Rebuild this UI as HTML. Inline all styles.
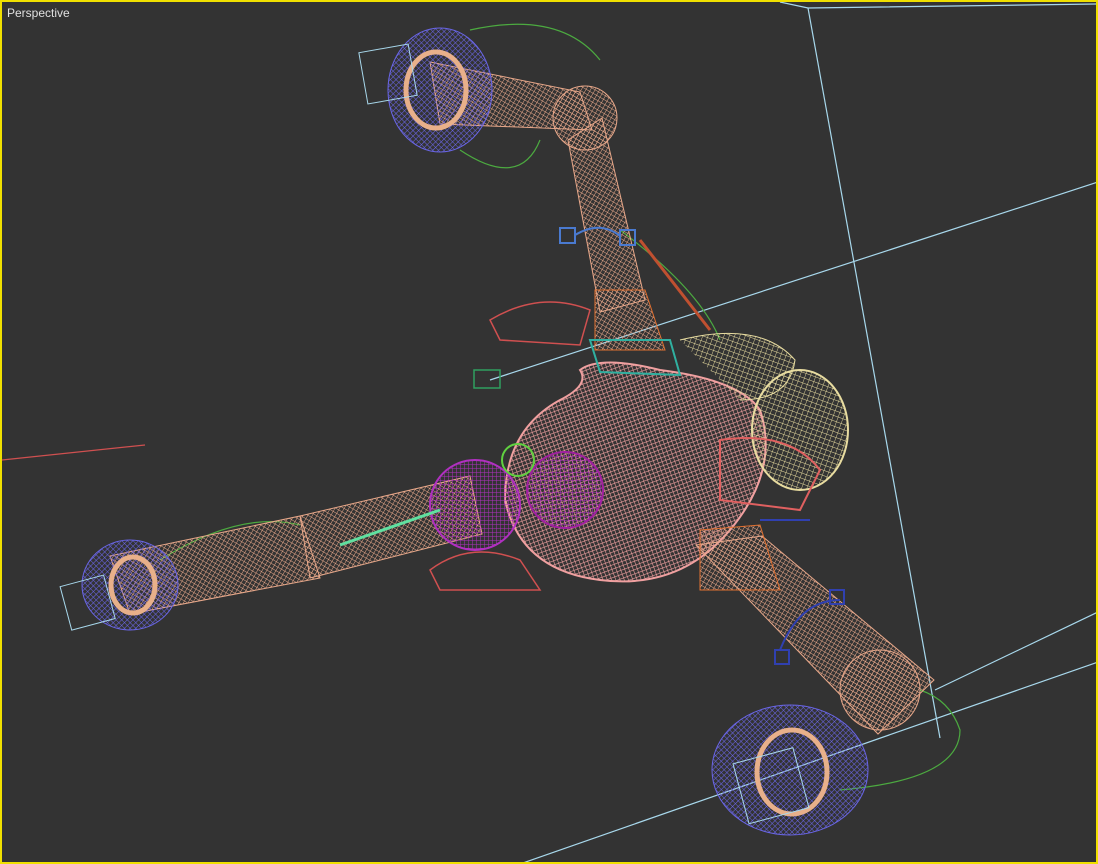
<!DOCTYPE html>
<html><head><style>
html,body{margin:0;padding:0;background:#333;}
.v{position:relative;width:1094px;height:860px;border:2px solid #f0e000;background:#333;overflow:hidden;}
.t{position:absolute;left:5px;top:4px;font:12px "Liberation Sans",sans-serif;color:#e0e0e0;}
svg{position:absolute;left:-2px;top:-2px;}
</style></head><body>
<div class="v">
<svg width="1098" height="864" viewBox="0 0 1098 864">
<defs>
<pattern id="h" width="4" height="4" patternUnits="userSpaceOnUse" patternTransform="rotate(30)"><path d="M0 0V4M0 0H4" stroke="#e8a88a" stroke-width="1"/></pattern>
<pattern id="p" width="4" height="4" patternUnits="userSpaceOnUse" patternTransform="rotate(-20)"><path d="M0 0V4M0 0H4" stroke="#f0a0a0" stroke-width="1.2"/></pattern>
<pattern id="b" width="4" height="4" patternUnits="userSpaceOnUse" patternTransform="rotate(45)"><path d="M0 0V4M0 0H4" stroke="#6a66e8" stroke-width="1.1"/></pattern>
<pattern id="y" width="5" height="5" patternUnits="userSpaceOnUse" patternTransform="rotate(20)"><path d="M0 0V5M0 0H5" stroke="#e8dca0" stroke-width="0.9"/></pattern>
<pattern id="m" width="4" height="4" patternUnits="userSpaceOnUse"><path d="M0 0V4M0 0H4" stroke="#b030c0" stroke-width="1"/></pattern>
</defs>
<g stroke="#a8d8ec" stroke-width="1.2" fill="none">
<path d="M780 2 L808 8 L1098 4"/><path d="M808 8 L940 738"/>
<path d="M490 380 L1098 182"/>
<path d="M935 690 L1098 612"/><path d="M520 864 L1098 662"/>
</g>
<path d="M2 460 L145 445" stroke="#d05050" stroke-width="1.2"/>
<g stroke="#4caa40" fill="none" stroke-width="1.2">
<path d="M470 30 Q560 10 600 60"/><path d="M460 150 Q520 190 540 140"/>
<path d="M160 560 Q240 510 300 525"/><path d="M840 790 Q960 780 960 730 Q950 700 920 690"/>
<path d="M620 230 Q700 290 720 340"/>
</g>
<polygon points="430,62 580,92 592,130 440,124" fill="url(#h)" stroke="#e8a88a"/>
<polygon points="568,140 602,118 645,300 600,312" fill="url(#h)" stroke="#e8a88a"/>
<circle cx="585" cy="118" r="32" fill="url(#h)" stroke="#e8a88a"/>
<polygon points="595,290 645,290 665,350 595,350" fill="url(#h)" stroke="#e07030"/>
<ellipse cx="440" cy="90" rx="52" ry="62" fill="url(#b)" stroke="#6a66e8"/>
<ellipse cx="436" cy="90" rx="30" ry="38" fill="none" stroke="#e8b08a" stroke-width="5"/>
<rect x="363" y="48" width="50" height="52" fill="none" stroke="#a8d8ec" transform="rotate(-10 388 74)"/>
<g fill="none" stroke="#4a7ad0" stroke-width="2"><rect x="560" y="228" width="15" height="15"/><rect x="620" y="230" width="15" height="15"/><path d="M575 235 Q600 220 620 236"/></g>
<path d="M640 240 L710 330" stroke="#c05030" stroke-width="3"/>
<path d="M580 370 Q600 355 660 370 Q740 380 760 410 Q780 470 730 530 Q680 590 600 580 Q520 570 505 500 Q505 430 560 400 Q590 385 580 370Z" fill="url(#p)" stroke="#f0a0a0" stroke-width="2"/>
<ellipse cx="800" cy="430" rx="48" ry="60" fill="url(#y)" stroke="#e8dca0" stroke-width="2"/>
<path d="M680 340 Q760 320 795 360 Q790 400 740 400" fill="url(#y)" stroke="#e8dca0"/>
<path d="M490 320 Q540 290 590 310 L580 345 L500 340 Z" fill="none" stroke="#d05050" stroke-width="1.5"/>
<path d="M430 570 Q470 540 520 560 L540 590 L440 590Z" fill="none" stroke="#d05050" stroke-width="1.5"/>
<rect x="474" y="370" width="26" height="18" fill="none" stroke="#30a060" stroke-width="1.5"/>
<path d="M590 340 L670 340 L680 375 L600 372Z" fill="none" stroke="#30b0a0" stroke-width="2"/>
<path d="M720 440 Q790 430 820 470 L800 510 L720 500Z" fill="none" stroke="#e06060" stroke-width="2"/>
<polygon points="110,556 300,516 320,578 130,614" fill="url(#h)" stroke="#e8a88a"/>
<polygon points="300,516 470,476 482,534 310,578" fill="url(#h)" stroke="#e8a88a"/>
<ellipse cx="130" cy="585" rx="48" ry="45" fill="url(#b)" stroke="#6a66e8"/>
<ellipse cx="133" cy="585" rx="22" ry="28" fill="none" stroke="#e8b08a" stroke-width="5"/>
<rect x="65" y="580" width="45" height="45" fill="none" stroke="#a8d8ec" transform="rotate(-15 88 602)"/>
<circle cx="475" cy="505" r="45" fill="url(#m)" stroke="#b030c0" stroke-width="2"/>
<circle cx="565" cy="490" r="38" fill="url(#m)" stroke="#a020a0" stroke-width="2"/>
<circle cx="518" cy="460" r="16" fill="none" stroke="#60d040" stroke-width="2"/>
<path d="M340 545 L440 510" stroke="#60e0a0" stroke-width="3"/>
<polygon points="696,545 762,536 934,680 878,734" fill="url(#h)" stroke="#e8a88a"/>
<polygon points="700,530 760,525 780,590 700,590" fill="url(#h)" stroke="#e07030"/>
<circle cx="880" cy="690" r="40" fill="url(#h)" stroke="#e8a88a"/>
<ellipse cx="790" cy="770" rx="78" ry="65" fill="url(#b)" stroke="#6a66e8"/>
<ellipse cx="792" cy="772" rx="35" ry="42" fill="none" stroke="#e8b08a" stroke-width="5"/>
<rect x="740" y="755" width="62" height="62" fill="none" stroke="#a8d8ec" transform="rotate(-15 770 786)"/>
<g fill="none" stroke="#3040b0" stroke-width="2"><path d="M780 650 Q800 600 840 600"/><rect x="830" y="590" width="14" height="14"/><rect x="775" y="650" width="14" height="14"/><path d="M760 520 L810 520"/></g>
</svg>
<div class="t">Perspective</div>
</div>
</body></html>
